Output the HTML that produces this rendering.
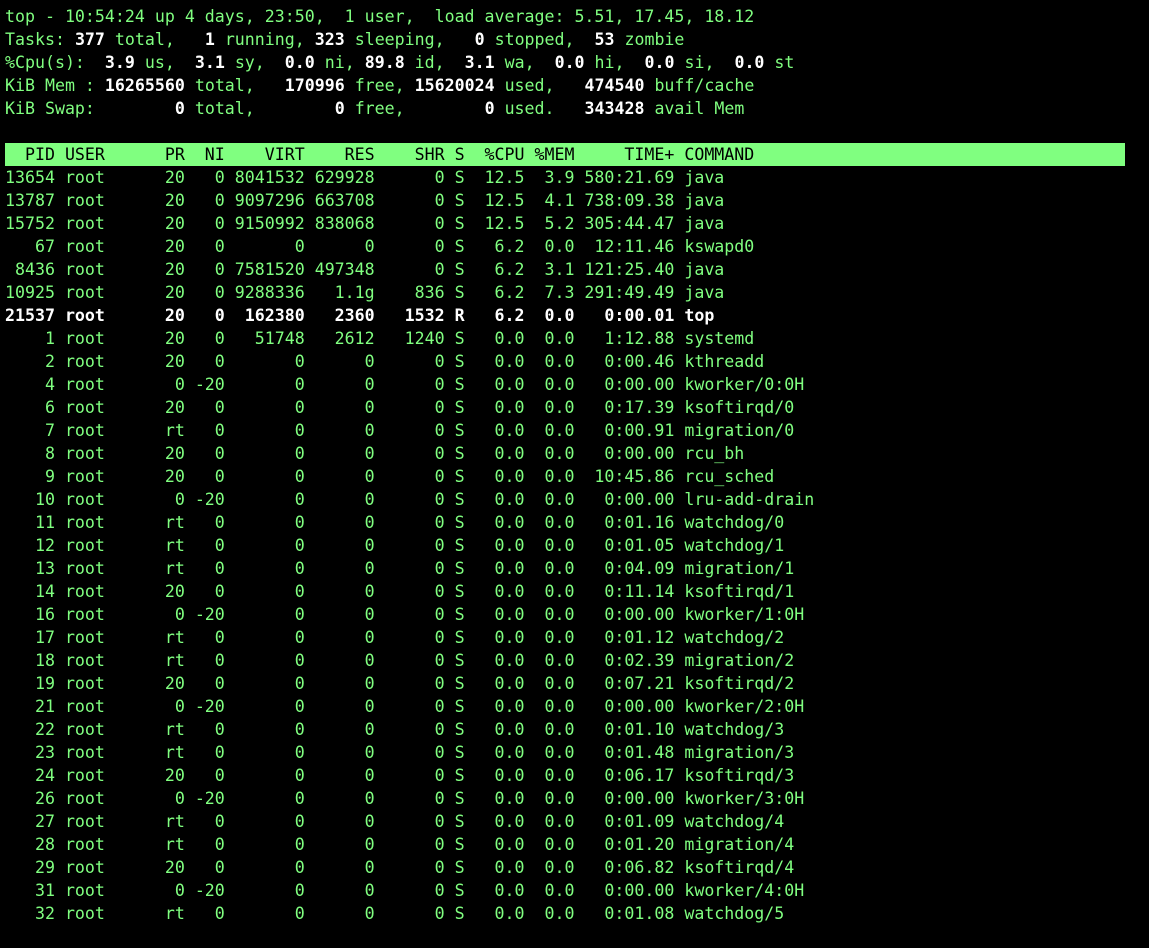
<!DOCTYPE html>
<html><head><meta charset="utf-8"><style>
html,body{margin:0;background:#000;width:1149px;height:948px;overflow:hidden}
pre{margin:0;position:absolute;left:5px;top:5px;font-family:"DejaVu Sans Mono","Liberation Mono",monospace;font-size:16.6px;line-height:23px;color:#80ff80;white-space:pre}
b{color:#fff;font-weight:bold}
.h{background:#80ff80;color:#000;display:inline-block;width:1120px}
</style></head><body><pre>top - 10:54:24 up 4 days, 23:50,  1 user,  load average: 5.51, 17.45, 18.12
Tasks: <b>377</b> total,   <b>1</b> running, <b>323</b> sleeping,   <b>0</b> stopped,  <b>53</b> zombie
%Cpu(s):  <b>3.9</b> us,  <b>3.1</b> sy,  <b>0.0</b> ni, <b>89.8</b> id,  <b>3.1</b> wa,  <b>0.0</b> hi,  <b>0.0</b> si,  <b>0.0</b> st
KiB Mem : <b>16265560</b> total,   <b>170996</b> free, <b>15620024</b> used,   <b>474540</b> buff/cache
KiB Swap:        <b>0</b> total,        <b>0</b> free,        <b>0</b> used.   <b>343428</b> avail Mem

<span class="h">  PID USER      PR  NI    VIRT    RES    SHR S  %CPU %MEM     TIME+ COMMAND</span>
13654 root      20   0 8041532 629928      0 S  12.5  3.9 580:21.69 java
13787 root      20   0 9097296 663708      0 S  12.5  4.1 738:09.38 java
15752 root      20   0 9150992 838068      0 S  12.5  5.2 305:44.47 java
   67 root      20   0       0      0      0 S   6.2  0.0  12:11.46 kswapd0
 8436 root      20   0 7581520 497348      0 S   6.2  3.1 121:25.40 java
10925 root      20   0 9288336   1.1g    836 S   6.2  7.3 291:49.49 java
<b>21537 root      20   0  162380   2360   1532 R   6.2  0.0   0:00.01 top</b>
    1 root      20   0   51748   2612   1240 S   0.0  0.0   1:12.88 systemd
    2 root      20   0       0      0      0 S   0.0  0.0   0:00.46 kthreadd
    4 root       0 -20       0      0      0 S   0.0  0.0   0:00.00 kworker/0:0H
    6 root      20   0       0      0      0 S   0.0  0.0   0:17.39 ksoftirqd/0
    7 root      rt   0       0      0      0 S   0.0  0.0   0:00.91 migration/0
    8 root      20   0       0      0      0 S   0.0  0.0   0:00.00 rcu_bh
    9 root      20   0       0      0      0 S   0.0  0.0  10:45.86 rcu_sched
   10 root       0 -20       0      0      0 S   0.0  0.0   0:00.00 lru-add-drain
   11 root      rt   0       0      0      0 S   0.0  0.0   0:01.16 watchdog/0
   12 root      rt   0       0      0      0 S   0.0  0.0   0:01.05 watchdog/1
   13 root      rt   0       0      0      0 S   0.0  0.0   0:04.09 migration/1
   14 root      20   0       0      0      0 S   0.0  0.0   0:11.14 ksoftirqd/1
   16 root       0 -20       0      0      0 S   0.0  0.0   0:00.00 kworker/1:0H
   17 root      rt   0       0      0      0 S   0.0  0.0   0:01.12 watchdog/2
   18 root      rt   0       0      0      0 S   0.0  0.0   0:02.39 migration/2
   19 root      20   0       0      0      0 S   0.0  0.0   0:07.21 ksoftirqd/2
   21 root       0 -20       0      0      0 S   0.0  0.0   0:00.00 kworker/2:0H
   22 root      rt   0       0      0      0 S   0.0  0.0   0:01.10 watchdog/3
   23 root      rt   0       0      0      0 S   0.0  0.0   0:01.48 migration/3
   24 root      20   0       0      0      0 S   0.0  0.0   0:06.17 ksoftirqd/3
   26 root       0 -20       0      0      0 S   0.0  0.0   0:00.00 kworker/3:0H
   27 root      rt   0       0      0      0 S   0.0  0.0   0:01.09 watchdog/4
   28 root      rt   0       0      0      0 S   0.0  0.0   0:01.20 migration/4
   29 root      20   0       0      0      0 S   0.0  0.0   0:06.82 ksoftirqd/4
   31 root       0 -20       0      0      0 S   0.0  0.0   0:00.00 kworker/4:0H
   32 root      rt   0       0      0      0 S   0.0  0.0   0:01.08 watchdog/5</pre></body></html>
